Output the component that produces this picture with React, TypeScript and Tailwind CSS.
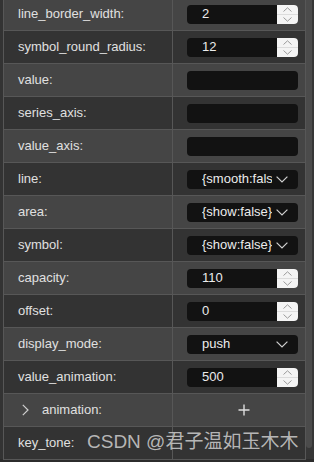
import React from 'react';

type Row =
  | { label: string; kind: 'number'; value: string }
  | { label: string; kind: 'text' }
  | { label: string; kind: 'select'; value: string }
  | { label: string; kind: 'group' };

const rows: Row[] = [
  { label: 'line_border_width:', kind: 'number', value: '2' },
  { label: 'symbol_round_radius:', kind: 'number', value: '12' },
  { label: 'value:', kind: 'text' },
  { label: 'series_axis:', kind: 'text' },
  { label: 'value_axis:', kind: 'text' },
  { label: 'line:', kind: 'select', value: '{smooth:false}' },
  { label: 'area:', kind: 'select', value: '{show:false}' },
  { label: 'symbol:', kind: 'select', value: '{show:false}' },
  { label: 'capacity:', kind: 'number', value: '110' },
  { label: 'offset:', kind: 'number', value: '0' },
  { label: 'display_mode:', kind: 'select', value: 'push' },
  { label: 'value_animation:', kind: 'number', value: '500' },
  { label: 'animation:', kind: 'group' },
  { label: 'key_tone:', kind: 'text' },
];

function Spinner() {
  return (
    <div className="w-[21px] h-full bg-[#f4f4f4] rounded-r-[4px] flex flex-col">
      <div className="flex-1 flex items-center justify-center border-b border-[#dcdcdc]">
        <svg width="9" height="5" viewBox="0 0 9 5" fill="none" stroke="#9a9a9a" strokeWidth="1">
          <path d="M0.5 4.5 L4.5 0.8 L8.5 4.5" />
        </svg>
      </div>
      <div className="flex-1 flex items-center justify-center">
        <svg width="9" height="5" viewBox="0 0 9 5" fill="none" stroke="#9a9a9a" strokeWidth="1">
          <path d="M0.5 0.5 L4.5 4.2 L8.5 0.5" />
        </svg>
      </div>
    </div>
  );
}

function ValueCell({ row }: { row: Row }) {
  if (row.kind === 'group') {
    return (
      <div className="flex-1 flex items-center justify-center pl-[10px]">
        <svg width="12" height="12" viewBox="0 0 12 12" stroke="#dedede" strokeWidth="1.4">
          <path d="M6 0.5 V11.5 M0.5 6 H11.5" />
        </svg>
      </div>
    );
  }
  if (row.label === 'key_tone:') return <div className="flex-1" />;
  return (
    <div className="flex-1 flex items-center pl-[14px]">
      <div className="w-[111px] h-[19px] bg-[#121212] rounded-[4px] flex items-center">
        {row.kind === 'number' && (
          <>
            <span className="flex-1 pl-[15px] text-[13px] text-[#ececec]">{row.value}</span>
            <Spinner />
          </>
        )}
        {row.kind === 'select' && (
          <>
            <span className="ml-[15px] w-[70px] overflow-hidden whitespace-nowrap text-[13px] text-[#ececec]">
              {row.value}
            </span>
            <svg className="ml-[4px]" width="12" height="7" viewBox="0 0 12 7" fill="none" stroke="#cfcfcf" strokeWidth="1.2">
              <path d="M0.6 0.6 L6 6 L11.4 0.6" />
            </svg>
          </>
        )}
      </div>
    </div>
  );
}

export default function App() {
  return (
    <div
      className="relative w-[314px] h-[462px] overflow-hidden bg-[#2c2c2c] flex"
      style={{ fontFamily: '"Liberation Sans", Arial, "Noto Sans CJK SC", sans-serif' }}
    >
      <div className="w-[3px] bg-[#333333] h-[459px]" />
      <div className="w-[303px] -mt-[2px] self-start border-l border-r border-[#575757]">
        {rows.map((row, i) => (
          <div
            key={row.label}
            className={`h-[33px] flex border-b border-[#575757] ${i % 2 === 0 ? 'bg-[#454545]' : 'bg-[#333333]'}`}
          >
            <div className="w-[169px] border-r border-[#575757] flex items-center text-[13px] text-[#e0e0e0]">
              {row.kind === 'group' ? (
                <>
                  <svg className="ml-[18px]" width="7" height="12" viewBox="0 0 7 12" fill="none" stroke="#cfcfcf" strokeWidth="1.2">
                    <path d="M0.8 0.8 L6 6 L0.8 11.2" />
                  </svg>
                  <span className="ml-[13px]">{row.label}</span>
                </>
              ) : (
                <span className="pl-[14px]">{row.label}</span>
              )}
            </div>
            <ValueCell row={row} />
          </div>
        ))}
      </div>
      <div className="w-[8px] bg-[#363636] h-[459px]">
        <div className="w-[6px] h-[448px] bg-[#4b4b4b] rounded-b-[3px]" />
      </div>

      {/* CSDN watermark overlay */}
      <div className="absolute left-[87px] top-[430px] text-[19px] leading-[24px] text-[#cfcfcf]/85 whitespace-nowrap">
        CSDN @君子温如玉木木
      </div>
    </div>
  );
}
